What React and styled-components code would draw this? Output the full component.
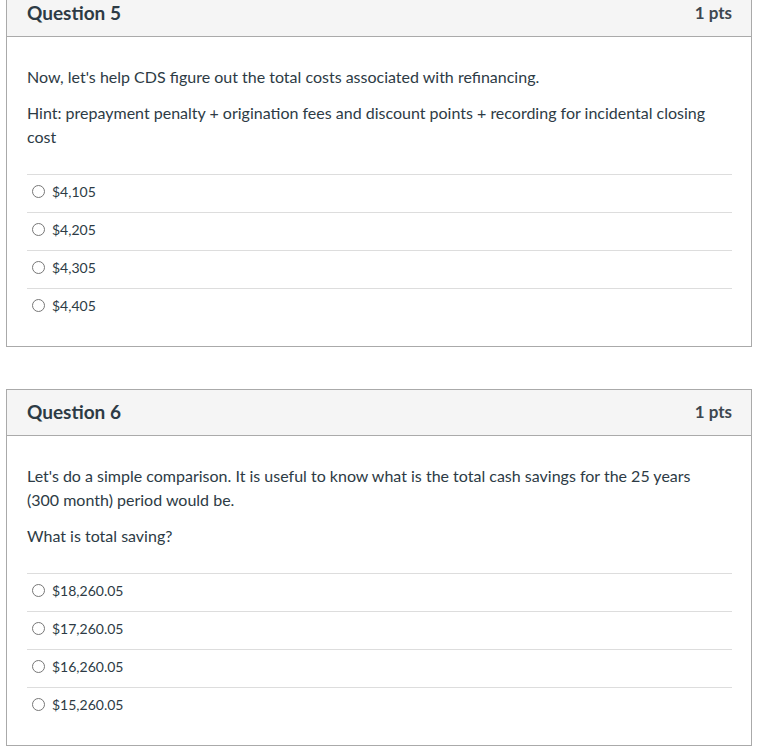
import React from "react";
import styled, { createGlobalStyle } from "styled-components";

const GlobalStyle = createGlobalStyle`
  body {
    margin: 0;
    background: #fff;
    font-family: Lato, "Open Sans", sans-serif;
    color: #2d3b45;
  }
`;

const questions = [
  {
    id: 5,
    points: "1 pts",
    text: [
      "Now, let's help CDS figure out the total costs associated with refinancing.",
      "Hint: prepayment penalty + origination fees and discount points + recording for incidental closing cost",
    ],
    answers: ["$4,105", "$4,205", "$4,305", "$4,405"],
  },
  {
    id: 6,
    points: "1 pts",
    text: [
      "Let's do a simple comparison. It is useful to know what is the total cash savings for the 25 years (300 month) period would be.",
      "What is total saving?",
    ],
    answers: ["$18,260.05", "$17,260.05", "$16,260.05", "$15,260.05"],
  },
];

const App = () => (
  <>
    <GlobalStyle />
    <Page>
      {questions.map((q) => (
        <Card key={q.id}>
          <Header>
            <Title>Question {q.id}</Title>
            <Points>{q.points}</Points>
          </Header>
          <Body>
            {q.text.map((t, i) => (
              <Para key={i}>{t}</Para>
            ))}
            <Answers>
              {q.answers.map((a) => (
                <Answer key={a}>
                  <Radio />
                  <AnswerText>{a}</AnswerText>
                </Answer>
              ))}
            </Answers>
          </Body>
        </Card>
      ))}
    </Page>
  </>
);

const Page = styled.div`
  padding: 0 32px 0 6px;
  margin-top: -10px;
  display: flex;
  flex-direction: column;
  gap: 42px;
`;

const Card = styled.div`
  width: 746px;
  box-sizing: border-box;
  border: 1px solid #aaaaaa;
  background: #fff;
`;

const Header = styled.div`
  height: 46px;
  box-sizing: border-box;
  background: #f5f5f5;
  border-bottom: 1px solid #aaaaaa;
  display: flex;
  align-items: center;
  justify-content: space-between;
  padding: 0 19px 3px 20px;
`;

const Title = styled.div`
  font-size: 19px;
  font-weight: 700;
  color: #2d3b45;
`;

const Points = styled.div`
  font-size: 17px;
  font-weight: 700;
  color: #3d4750;
`;

const Body = styled.div`
  padding: 28px 19px 20px 20px;
`;

const Para = styled.p`
  margin: 0 0 12px;
  max-width: 690px;
  font-size: 16px;
  line-height: 24px;
  color: #2d3b45;
`;

const Answers = styled.div`
  margin-top: 25px;
`;

const Answer = styled.div`
  height: 38px;
  box-sizing: border-box;
  border-top: 1px solid #dddddd;
  display: flex;
  align-items: center;
  padding: 0 0 4px 5px;
`;

const Radio = styled.span`
  width: 11px;
  height: 11px;
  border: 1px solid #777777;
  border-radius: 50%;
  margin-right: 7px;
  flex-shrink: 0;
`;

const AnswerText = styled.span`
  font-size: 14px;
  color: #2d3b45;
`;

export default App;
